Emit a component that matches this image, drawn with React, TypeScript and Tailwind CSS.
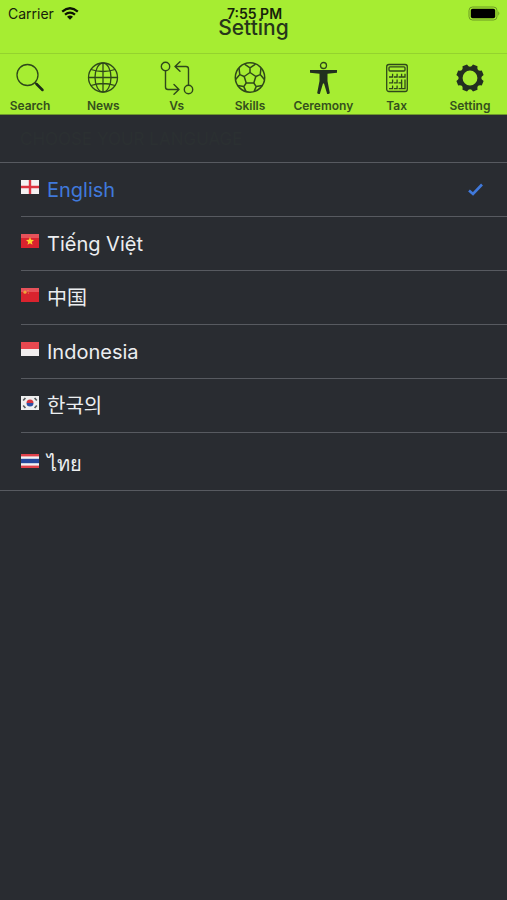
import React, { useState } from "react";

interface TabItem {
  label: string;
  icon: React.ReactNode;
}

interface Language {
  code: string;
  name: string;
  flag: React.ReactNode;
}

function SearchIcon() {
  return (
    <svg viewBox="0 0 32 32" className="w-8 h-8" fill="none" stroke="#2f481b">
      <circle cx="13.5" cy="13" r="10.5" strokeWidth="1.3" />
      <path d="M21 20.5 L23 22.5" strokeWidth="1.6" />
      <path d="M22.5 22 L28.5 28" stroke="#1c2c18" strokeWidth="2.5" strokeLinecap="round" />
    </svg>
  );
}

function GlobeIcon() {
  return (
    <svg viewBox="0 0 32 32" className="w-8 h-8" fill="none" stroke="#2f481b" strokeWidth="1.3">
      <circle cx="16" cy="15.5" r="14.5" />
      <ellipse cx="16" cy="15.5" rx="8" ry="14.5" />
      <path d="M16 1 V30 M1.5 15.5 H30.5 M4 7.5 Q16 11.5 28 7.5 M4 23.5 Q16 19.5 28 23.5" />
    </svg>
  );
}

function VersusIcon() {
  return (
    <svg viewBox="0 0 34 34" className="w-[34px] h-[34px]" fill="none" stroke="#2f481b" strokeWidth="1.4" strokeLinecap="round" strokeLinejoin="round">
      <circle cx="5.5" cy="5.5" r="4.2" />
      <circle cx="28.5" cy="28.5" r="4.2" />
      <path d="M5.5 9.7 V26 Q5.5 28.5 8 28.5 H19 M14 23.5 L19 28.5 L14 33.3" />
      <path d="M28.5 24.3 V8 Q28.5 5.5 26 5.5 H15 M20 0.7 L15 5.5 L20 10.3" />
    </svg>
  );
}

function BallIcon() {
  return (
    <svg viewBox="0 0 32 32" className="w-8 h-8" fill="none" stroke="#2f481b" strokeWidth="1.5" strokeLinejoin="round">
      <circle cx="16" cy="15.5" r="14.7" />
      <path d="M16 10.5 L21.8 14.5 L19.8 21 H12.2 L10.2 14.5 Z" />
      <path d="M16 10.5 V5.8 L10.5 2.2 M16 5.8 L21.5 2.2" />
      <path d="M10.2 14.5 L5.8 12.6 L5 6 M5.8 12.6 L1.6 17.5" />
      <path d="M21.8 14.5 L26.2 12.6 L27 6 M26.2 12.6 L30.4 17.5" />
      <path d="M12.2 21 L9.8 24.6 L3.6 23.4 M9.8 24.6 L12 29.6" />
      <path d="M19.8 21 L22.2 24.6 L28.4 23.4 M22.2 24.6 L20 29.6" />
    </svg>
  );
}

function PersonIcon() {
  return (
    <svg viewBox="0 0 32 34" className="w-8 h-[34px]">
      <circle cx="16.5" cy="4.5" r="3" fill="none" stroke="#2f481b" strokeWidth="1.3" />
      <path
        d="M3 9 H30 V11.8 L20.5 12.8 V20 L22.8 32 Q22.3 33.4 20.2 33 L17 22.5 H16 L12.8 33 Q10.7 33.4 10.2 32 L12.5 20 V12.8 L3 11.8 Z"
        fill="#22301f"
      />
    </svg>
  );
}

function CalculatorIcon() {
  return (
    <svg viewBox="0 0 24 30" className="w-6 h-[30px]" fill="none" stroke="#2f481b" strokeWidth="1.3">
      <rect x="1.7" y="1.5" width="20.6" height="27" rx="2.2" />
      <rect x="4" y="3.8" width="16" height="4.2" rx="1" />
      <path d="M4 14 H7.6 V10.8 M9 14 H12.1 V10.8 M13.5 14 H16.6 V10.8 M17 14 H20 V10.8" />
      <path d="M4 19.8 H7.6 V16.6 M9 19.8 H12.1 V16.6 M13.5 19.8 H16.6 V16.6" />
      <path d="M4 25.6 H7.6 V22.4 M9 25.6 H12.1 V22.4 M13.5 25.6 H20 V16.6 M16.6 25.6 V19.8" />
    </svg>
  );
}

function GearIcon() {
  return (
    <svg viewBox="0 0 30 30" className="w-[30px] h-[30px]" fill="#232f21">
      <path
        fillRule="evenodd"
        d="M12 1.5 Q15 6 18 1.5 L22.5 3.2 Q21.5 8.5 26.8 7.5 L28.6 12 Q24 15 28.6 18 L26.8 22.5 Q21.5 21.5 22.5 26.8 L18 28.6 Q15 24 12 28.6 L7.5 26.8 Q8.5 21.5 3.2 22.5 L1.4 18 Q6 15 1.4 12 L3.2 7.5 Q8.5 8.5 7.5 3.2 Z M15 7.6 A7.4 7.4 0 1 0 15 22.4 A7.4 7.4 0 1 0 15 7.6 Z"
      />
    </svg>
  );
}

function WifiIcon() {
  return (
    <svg viewBox="0 0 18 13" className="w-[18px] h-[13px]" fill="none" stroke="#0c1404" strokeWidth="2.3">
      <path d="M1.2 4.6 Q9 -2 16.8 4.6" />
      <path d="M4 7.7 Q9 3.6 14 7.7" />
      <path d="M6 9.8 Q9 7.4 12 9.8 L9 12.8 Z" fill="#0c1404" stroke="none" />
    </svg>
  );
}

function BatteryIcon() {
  return (
    <svg viewBox="0 0 33 15" className="w-[33px] h-[15px]">
      <rect x="1" y="1" width="28" height="13" rx="3.5" fill="none" stroke="#6c9a24" strokeWidth="1" />
      <rect x="2.8" y="2.8" width="24.4" height="9.4" rx="1.8" fill="#000000" />
      <path d="M30.3 5.3 Q32.4 7.5 30.3 9.7 Z" fill="#6c9a24" />
    </svg>
  );
}

const FLAG_CLASS = "w-[18px] h-[14px] shrink-0";

const tabs: TabItem[] = [
  { label: "Search", icon: <SearchIcon /> },
  { label: "News", icon: <GlobeIcon /> },
  { label: "Vs", icon: <VersusIcon /> },
  { label: "Skills", icon: <BallIcon /> },
  { label: "Ceremony", icon: <PersonIcon /> },
  { label: "Tax", icon: <CalculatorIcon /> },
  { label: "Setting", icon: <GearIcon /> },
];

const languages: Language[] = [
  {
    code: "en",
    name: "English",
    flag: (
      <svg viewBox="0 0 18 14" className={FLAG_CLASS}>
        <rect width="18" height="14" fill="#f4f1f2" />
        <path d="M9 0 V14 M0 7 H18" stroke="#dc3340" strokeWidth="2.4" />
      </svg>
    ),
  },
  {
    code: "vi",
    name: "Tiếng Việt",
    flag: (
      <svg viewBox="0 0 18 14" className={FLAG_CLASS}>
        <rect width="18" height="14" fill="#d9232e" />
        <rect width="18" height="4" fill="#e6525a" />
        <path d="M9 3 L10.1 5.8 L13 6 L10.8 7.9 L11.5 10.8 L9 9.2 L6.5 10.8 L7.2 7.9 L5 6 L7.9 5.8 Z" fill="#fbd62e" />
      </svg>
    ),
  },
  {
    code: "zh",
    name: "中国",
    flag: (
      <svg viewBox="0 0 18 14" className={FLAG_CLASS}>
        <rect width="18" height="14" fill="#d9232e" />
        <rect width="18" height="4" fill="#e6525a" />
        <circle cx="4" cy="4.2" r="1.6" fill="#f0a33a" />
        <circle cx="7" cy="2.5" r="0.6" fill="#f0a33a" />
        <circle cx="7.4" cy="5" r="0.6" fill="#f0a33a" />
      </svg>
    ),
  },
  {
    code: "id",
    name: "Indonesia",
    flag: (
      <svg viewBox="0 0 18 14" className={FLAG_CLASS}>
        <rect width="18" height="14" fill="#f1eeee" />
        <rect width="18" height="7" fill="#e8474f" />
      </svg>
    ),
  },
  {
    code: "ko",
    name: "한국의",
    flag: (
      <svg viewBox="0 0 18 14" className={FLAG_CLASS}>
        <rect width="18" height="14" fill="#efefef" />
        <path d="M5.5 7 A3.5 3.5 0 0 1 12.5 7 Z" fill="#d8343f" />
        <path d="M5.5 7 A3.5 3.5 0 0 0 12.5 7 Z" fill="#2c4ea3" />
        <path d="M2.2 4.6 L4.4 2 M13.6 2 L15.8 4.6 M2.2 9.4 L4.4 12 M13.6 12 L15.8 9.4" stroke="#55585c" strokeWidth="1.6" />
      </svg>
    ),
  },
  {
    code: "th",
    name: "ไทย",
    flag: (
      <svg viewBox="0 0 18 14" className={FLAG_CLASS}>
        <rect width="18" height="14" fill="#e0414b" />
        <rect y="2.4" width="18" height="9.2" fill="#f2f2f4" />
        <rect y="4.8" width="18" height="4.4" fill="#25479b" />
      </svg>
    ),
  },
];

export default function App() {
  const [activeTab, setActiveTab] = useState("Setting");
  const [language, setLanguage] = useState("en");

  return (
    <div className="min-h-screen bg-[#292c31] font-['Inter','Noto_Sans_CJK_SC','Noto_Sans_CJK_KR',sans-serif]">
      <header className="relative bg-[#a6ed32] border-b border-[#94d32e] pt-[14px] pb-[11px]">
        {/* Status bar floats over the title */}
        <div className="absolute inset-x-0 top-0 grid grid-cols-3 items-center pl-2 pr-[6px] h-[27px] text-sm text-[#17220a]">
          <div className="flex items-center gap-[7px]">
            <span>Carrier</span>
            <WifiIcon />
          </div>
          <span className="text-center font-semibold">7:55 PM</span>
          <div className="flex justify-end">
            <BatteryIcon />
          </div>
        </div>
        <h1 className="text-center text-[21px] leading-7 font-medium text-[#26361a]">{activeTab}</h1>
      </header>

      {/* Tabs */}
      <nav className="flex justify-between bg-[#a6ed32] border-b border-[#6f9a2c] pr-[7px] pt-[5px]">
        {tabs.map((tab) => (
          <button
            key={tab.label}
            onClick={() => setActiveTab(tab.label)}
            className="flex flex-col items-center gap-[2px] w-[60px] cursor-pointer"
          >
            <span className="flex items-center justify-center h-[37px]">{tab.icon}</span>
            <span className="text-xs leading-4 font-semibold whitespace-nowrap text-[#34501d]">{tab.label}</span>
          </button>
        ))}
      </nav>

      <main>
        <h2 className="px-5 pt-3 pb-[11px] text-[17px] leading-6 text-[#2b3032] border-b border-[#575a60]">
          CHOOSE YOUR LANGUAGE
        </h2>
        <ul className="border-b border-[#575a60]">
          {languages.map((item) => (
            <li key={item.code} className="ml-[21px] border-b border-[#575a60] last:border-b-0 last:pt-1">
              <button
                onClick={() => setLanguage(item.code)}
                className={`flex items-center w-full h-[53px] pr-6 text-xl cursor-pointer ${
                  language === item.code ? "text-[#4079db]" : "text-[#eceef0]"
                }`}
              >
                <span className="pb-[5px] pr-2">{item.flag}</span>
                <span>{item.name}</span>
                {language === item.code && (
                  <svg viewBox="0 0 15 13" className="w-[15px] h-[13px] ml-auto" fill="none" stroke="currentColor" strokeWidth="2.6">
                    <path d="M1 7.5 L5 11 L14 1.5" />
                  </svg>
                )}
              </button>
            </li>
          ))}
        </ul>
      </main>
    </div>
  );
}
